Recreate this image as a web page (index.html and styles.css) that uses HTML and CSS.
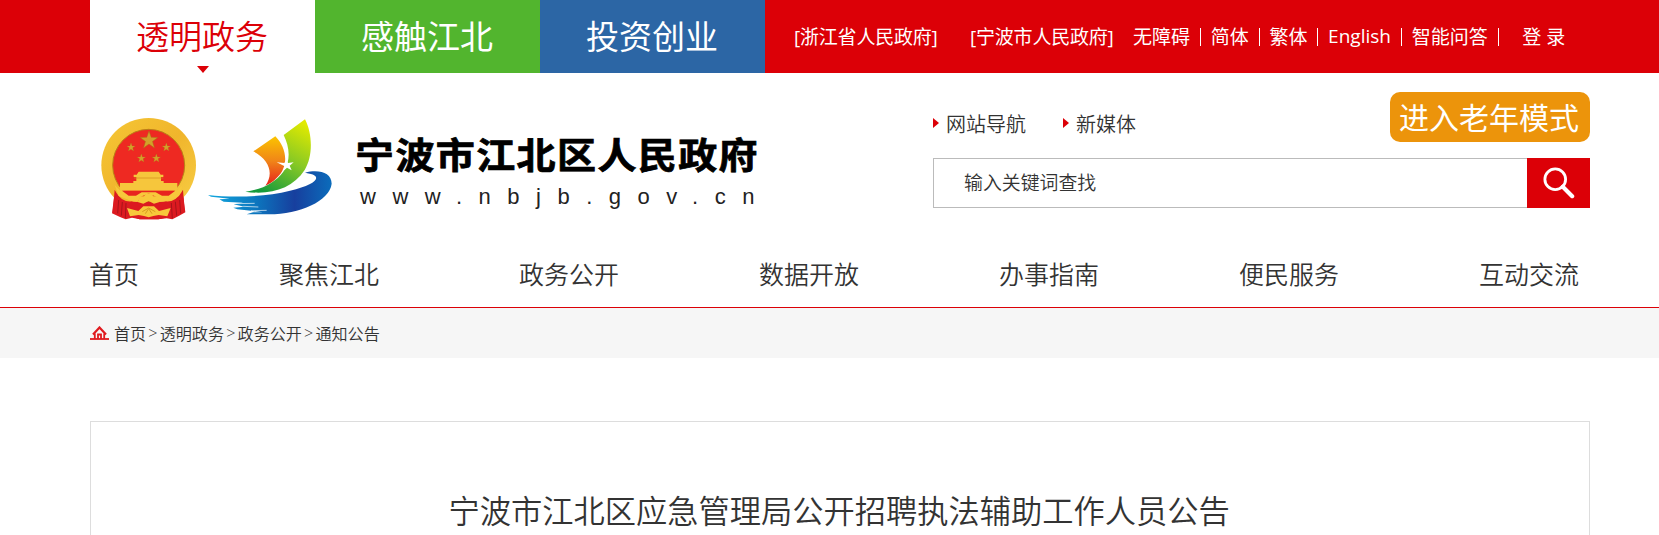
FILE: index.html
```html
<!DOCTYPE html>
<html lang="zh-CN">
<head>
    <meta charset="UTF-8">
    <title>宁波市江北区人民政府</title>
    <link rel="stylesheet" href="styles.css">
</head>
<body>
    <div class="top">
        <div class="wrap top-inner">
            <div class="tabs">
                <a class="tab active">透明政务</a>
                <a class="tab green">感触江北</a>
                <a class="tab blue">投资创业</a>
            </div>
            <div class="top-links">
                <a class="gov">[浙江省人民政府]</a>
                <a class="gov gov-city">[宁波市人民政府]</a>
                <a class="lang">无障碍</a>
                <a class="lang">简体</a>
                <a class="lang">繁体</a>
                <a class="lang en">English</a>
                <a class="lang">智能问答</a>
                <a class="login">登 录</a>
            </div>
        </div>
    </div>

    <div class="wrap header">
        <div class="logo">
            <svg class="logo-pic" viewBox="0 0 780 375">
                <defs>
                    <linearGradient id="gold" x1="0" y1="0" x2="1" y2="1">
                        <stop offset="0" stop-color="#f5c735"/>
                        <stop offset="0.5" stop-color="#f0b52c"/>
                        <stop offset="1" stop-color="#f8cf45"/>
                    </linearGradient>
                    <linearGradient id="orange" x1="0" y1="0" x2="0" y2="1">
                        <stop offset="0" stop-color="#fbc400"/>
                        <stop offset="0.5" stop-color="#f08518"/>
                        <stop offset="1" stop-color="#e6211a"/>
                    </linearGradient>
                    <linearGradient id="leaf" x1="0.8" y1="0" x2="0.3" y2="1">
                        <stop offset="0" stop-color="#e2ea00"/>
                        <stop offset="0.5" stop-color="#86c825"/>
                        <stop offset="1" stop-color="#179b3c"/>
                    </linearGradient>
                    <linearGradient id="sea" x1="0" y1="0" x2="1" y2="0">
                        <stop offset="0" stop-color="#12a8df"/>
                        <stop offset="0.4" stop-color="#0c74bd"/>
                        <stop offset="0.7" stop-color="#173f9e"/>
                        <stop offset="1" stop-color="#0b6cbb"/>
                    </linearGradient>
                    <path id="star" d="M0-10 2.4-3.2 9.5-3.1 3.8 1.2 5.9 8.1 0 4-5.9 8.1-3.8 1.2-9.5-3.1-2.4-3.2z"/>
                </defs>
                <!-- emblem -->
                <path fill="#dc1a20" d="M76 250 66 325 90 336 107 343 126 338 150 343H205L230 340 247 343 266 333 286 322 277 250z"/>
                <circle cx="176" cy="181" r="142" fill="url(#gold)"/>
                <path fill="#dc1a20" d="M74 254C94 294 122 294 145 283L176 270 207 283C231 294 257 294 279 254L284 321 240 335 205 343H148L112 330 68 321z"/>
                <circle cx="176" cy="181" r="108" fill="#ee2922" stroke="#b98016" stroke-width="3"/>
                <g fill="#d3a02a" stroke="#a96d15" stroke-width="0.5">
                    <use href="#star" transform="translate(177 106) scale(2.8)"/>
                    <use href="#star" transform="translate(123 127) scale(1.35)"/>
                    <use href="#star" transform="translate(229 127) scale(1.35)"/>
                    <use href="#star" transform="translate(154 160) scale(1.35)"/>
                    <use href="#star" transform="translate(199 160) scale(1.35)"/>
                </g>
                <path fill="#f6c63c" d="M146 200H206L212 209H220V216H213V228H221V234H262V256H90V234H130V228H139V216H131V209H140z"/>
                <path stroke="#d18a1c" stroke-width="2" d="M132 219H220"/>
                <!-- gear and ribbons -->
                <path fill="#f7c83b" d="M74 240 90 256H262L278 240 267 273 222 290 208 291 200 276 185 269 176 264 166 269 151 276 143 291 130 290 86 273z"/>
                <path fill="#e8241f" d="M96 257H256L236 272H216L197 262 155 262 138 272H116z"/>
                <path fill="#f7c83b" d="M143 291 150 274H162L168 265H184L190 274H202L209 291 192 296 176 288 160 296z"/>
                <path fill="#f7c83b" d="M111 309 145 318 160 304H192L207 318 242 309 232 334 206 330 190 333 176 337 162 333 146 330 120 334z"/>
                <path fill="none" stroke="#a8131a" stroke-width="3" d="M86 285 83 325M97 291 94 332M108 294 106 339M244 294 247 340M256 290 260 332M269 285 272 325"/>
                <path fill="none" stroke="#d79a20" stroke-width="3" d="M157 320 176 309 196 320M166 326 176 311 186 326"/>
                <!-- sails -->
                <path fill="url(#orange)" d="M490 139 556 94C589 128 599 180 562 217 550 230 538 238 526 242 551 208 541 166 490 139z"/>
                <path fill="url(#leaf)" d="M581 90 645 43C667 84 670 153 644 195 607 252 540 271 466 260 517 254 556 232 580 200 604 165 598 125 581 90z"/>
                <path fill="#fff" d="M560 172 583 174 590 163 594 174 611 172 599 182 605 196 591 188 581 197 584 184z"/>
                <!-- wave -->
                <path fill="url(#sea)" d="M354 270C430 279 524 276 600 257 671 241 696 218 666 208L645 203C687 192 725 203 725 236 719 289 624 330 531 328L470 328 489 322 518 322 483 317 442 313 430 308 463 305 431 298 459 293 401 290 388 283 419 281 363 275z"/>
                <path fill="none" stroke="#fff" stroke-width="2" d="M427 296 494 295M460 304 505 306M483 317 530 316"/>
            </svg>
            <div class="logo-text">
                <div class="site-name">宁波市江北区人民政府</div>
                <div class="site-url">www.nbjb.gov.cn</div>
            </div>
        </div>
        <div class="tools">
            <div class="tools-top">
                <a class="quick">网站导航</a>
                <a class="quick">新媒体</a>
                <a class="old-mode">进入老年模式</a>
            </div>
            <div class="search">
                <div class="search-input">输入关键词查找</div>
                <div class="search-btn">
                    <svg width="32" height="32" viewBox="0 0 34 34" fill="none" stroke="#fff">
                        <circle cx="13" cy="13" r="11" stroke-width="3"/>
                        <path d="M21 21 31 31" stroke-width="4.4" stroke-linecap="round"/>
                    </svg>
                </div>
            </div>
        </div>
    </div>

    <div class="nav">
        <div class="wrap nav-inner">
            <a>首页</a>
            <a>聚焦江北</a>
            <a>政务公开</a>
            <a>数据开放</a>
            <a>办事指南</a>
            <a>便民服务</a>
            <a>互动交流</a>
        </div>
    </div>

    <div class="crumb">
        <div class="wrap crumb-inner">
            <svg class="home" width="19" height="14" viewBox="0 0 19 14" fill="none" stroke="#e01a1f">
                <path d="M3 8.5 9.5 1.5 16 8.5" stroke-width="2.2"/>
                <path d="M4.8 7.5V13M14.2 7.5V13M8 13V8.5H11V13" stroke-width="1.8"/>
                <path d="M0 13H19" stroke-width="1.8"/>
            </svg>
            <a>首页</a><span>&gt;</span><a>透明政务</a><span>&gt;</span><a>政务公开</a><span>&gt;</span><a>通知公告</a>
        </div>
    </div>

    <div class="wrap article">
        <h1>宁波市江北区应急管理局公开招聘执法辅助工作人员公告</h1>
    </div>
</body>
</html>
```

FILE: styles.css
```css
body {
    margin: 0;
    height: 535px;
    overflow: hidden;
    background-color: #fff;
    color: #333;
    font-family: "Open Sans", "Noto Sans CJK SC", sans-serif;
    font-weight: 350;
}
.wrap {
    width: 1500px;
    margin-left: 90px;
    box-sizing: border-box;
}

.top {
    height: 73px;
    background-color: #dc0007;
    color: #fff;
}
.top-inner {
    display: flex;
}
.tabs {
    display: flex;
}
.tab {
    position: relative;
    width: 225px;
    height: 73px;
    line-height: 73px;
    text-align: center;
    font-size: 33px;
    text-indent: -1px;
}
.tab.active {
    background-color: #fff;
    color: #dc0007;
}
.tab.active::after {
    content: "";
    position: absolute;
    left: 107px;
    bottom: 0;
    border: 6px solid transparent;
    border-top: 7px solid #dc0007;
    border-bottom: 0;
}
.green {
    background-color: #52b52e;
    font-weight: 400;
}
.blue {
    background-color: #2c66a5;
    font-weight: 400;
}
.top-links {
    display: flex;
    align-items: center;
    height: 71px;
    padding-left: 29px;
    font-size: 19px;
    font-weight: 400;
    white-space: nowrap;
}
.gov {
    width: 176px;
    letter-spacing: -0.2px;
}
.gov-city {
    width: 163px;
}
.lang {
    display: flex;
    align-items: center;
}
.lang::after {
    content: "";
    width: 1px;
    height: 18px;
    margin: 2px 9.7px 0 10px;
    background-color: #fff;
}
.en {
    font-weight: 500;
}
.login {
    margin-left: 14px;
}

.header {
    display: flex;
    justify-content: space-between;
    height: 167px;
}
.logo {
    display: flex;
    padding-top: 32px;
}
.logo-pic {
    width: 260px;
    height: 125px;
}
.logo-text {
    padding: 23px 0 0 5px;
    color: #000;
    white-space: nowrap;
}
.site-name {
    line-height: 54px;
    font-size: 39px;
    font-weight: 700;
    letter-spacing: 1.4px;
    transform: scaleY(0.93);
    -webkit-text-stroke: 0.8px #000;
}
.site-url {
    padding-left: 5px;
    line-height: 30px;
    font-family: "Liberation Sans", sans-serif;
    font-size: 22px;
    font-weight: 400;
    letter-spacing: 16.5px;
    color: #222;
}
.tools {
    width: 657px;
    padding-top: 19px;
}
.tools-top {
    display: flex;
    height: 50px;
    margin-bottom: 16px;
}
.quick {
    display: flex;
    align-items: center;
    height: 62px;
    margin-right: 37px;
    font-size: 20px;
}
.quick::before {
    content: "";
    margin-right: 7px;
    border: 5px solid transparent;
    border-left: 6px solid #dc0007;
    border-right: 0;
}
.old-mode {
    width: 200px;
    margin-left: auto;
    border-radius: 10px;
    background-color: #ec940b;
    color: #fff;
    line-height: 52px;
    text-align: center;
    text-indent: -2px;
    font-size: 30px;
    font-weight: 400;
}
.search {
    display: flex;
    height: 50px;
}
.search-input {
    flex: 1;
    padding-left: 30px;
    border: 1px solid #bbb;
    border-right: 0;
    line-height: 49px;
    font-size: 18.9px;
}
.search-btn {
    display: flex;
    align-items: center;
    justify-content: center;
    width: 63px;
    background-color: #dc0007;
}

.nav {
    border-bottom: 1px solid #dc0007;
}
.nav-inner {
    display: flex;
    gap: 141px;
    height: 67px;
    line-height: 68px;
    font-size: 25px;
    text-indent: -1px;
}

.crumb {
    background-color: #f6f6f6;
}
.crumb-inner {
    display: flex;
    align-items: center;
    height: 50px;
    font-size: 16.1px;
}
.crumb-inner a {
    margin-top: -1px;
}
.crumb-inner span {
    width: 13.5px;
    text-align: center;
}
.home {
    margin-right: 5px;
}

.article {
    height: 114px;
    margin-top: 63px;
    border: 1px solid #ddd;
    border-bottom: 0;
}
.article h1 {
    margin: 0;
    padding-top: 65px;
    line-height: 49px;
    text-align: center;
    font-size: 31.25px;
    font-weight: 350;
    text-indent: -2px;
}
```
